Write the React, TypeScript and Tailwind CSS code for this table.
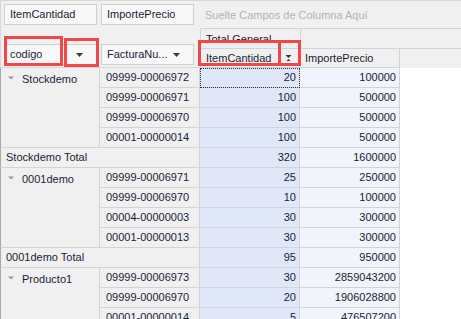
import React from "react";

type Item = [string, number, number];
interface Group {
  name: string;
  items: Item[];
  total?: [number, number];
}

const groups: Group[] = [
  {
    name: "Stockdemo",
    items: [
      ["09999-00006972", 20, 100000],
      ["09999-00006971", 100, 500000],
      ["09999-00006970", 100, 500000],
      ["00001-00000014", 100, 500000],
    ],
    total: [320, 1600000],
  },
  {
    name: "0001demo",
    items: [
      ["09999-00006971", 25, 250000],
      ["09999-00006970", 10, 100000],
      ["00004-00000003", 30, 300000],
      ["00001-00000013", 30, 300000],
    ],
    total: [95, 950000],
  },
  {
    name: "Producto1",
    items: [
      ["09999-00006973", 30, 2859043200],
      ["09999-00006970", 20, 1906028800],
      ["00001-00000014", 5, 476507200],
    ],
  },
];

function Caret() {
  return (
    <svg width="7" height="4" viewBox="0 0 7 4" className="shrink-0">
      <path d="M0 0 H7 L3.5 4 Z" fill="#3a3a3a" />
    </svg>
  );
}

function Expander() {
  return (
    <svg width="6" height="4" viewBox="0 0 6 4" className="shrink-0">
      <path d="M0 0.5 H6 L3 3.5 Z" fill="#9a9a9a" />
    </svg>
  );
}

function SortGlyph() {
  return (
    <svg width="7" height="8" viewBox="0 0 7 8" className="shrink-0">
      <path d="M0.5 1 H6.5 L3.5 4 Z" fill="#333" />
      <path d="M1.5 7 H5.5 L3.5 5 Z" fill="#333" />
    </svg>
  );
}

function FieldButton({ label, arrow }: { label: string; arrow?: boolean }) {
  return (
    <div className="w-[93px] h-[21px] shrink-0 bg-[#f8f8f8] border border-[#cfcfcf] flex items-center pl-[5px] pr-[13px] justify-between">
      <span className="truncate">{label}</span>
      {arrow && <Caret />}
    </div>
  );
}

const fmt = (n: number) => String(n);

export default function App() {
  return (
    <div
      className="w-[461px] h-[319px] overflow-hidden bg-white text-[11px] text-[#1c1c36] leading-none"
      style={{ fontFamily: '"Liberation Sans", Arial, sans-serif' }}
    >
      {/* column field area */}
      <div className="h-[28px] bg-[#f0f0f0] border-t border-l border-[#d8d8d8] flex items-start pt-[3px] pl-[3px] gap-[4px]">
        <FieldButton label="ItemCantidad" />
        <FieldButton label="ImportePrecio" />
        <span className="text-[#b2b2b2] ml-[7px] mt-[6px]">Suelte Campos de Columna Aquí</span>
      </div>

      {/* header area */}
      <div className="flex h-[40px] bg-[#f0f0f0]">
        <div className="w-[200px] shrink-0 border-l border-b border-[#d8d8d8] flex items-start pt-[16px] pl-[3px] gap-[4px]">
          <FieldButton label="codigo" arrow />
          <FieldButton label="FacturaNu..." arrow />
        </div>
        <div className="flex-1 flex flex-col border-t border-l border-[#d4d4d4]">
          <div className="flex h-[20px] border-b border-[#d4d4d4]">
            <div className="w-[100px] shrink-0 border-r border-[#d4d4d4] flex items-center pl-[5px] pt-[1px]">Total General</div>
            <div className="flex-1" />
          </div>
          <div className="flex h-[19px]">
            <div className="w-[99px] shrink-0 border-r border-b border-[#d4d4d4] flex items-center justify-between pl-[5px] pr-[7px]">
              <span>ItemCantidad</span>
              <SortGlyph />
            </div>
            <div className="w-[100px] shrink-0 border-r border-b border-[#d4d4d4] flex items-center pl-[5px]">ImportePrecio</div>
            <div className="flex-1" />
          </div>
        </div>
      </div>

      {/* data rows */}
      {groups.map((g, gi) => (
        <div key={g.name}>
          <div className="flex">
            <div className="w-[100px] shrink-0 bg-[#f0f0f0] border-l border-l-[#a8a8a8] border-r border-b border-[#d4d4d4] flex items-start pl-[7px] pt-[6px] gap-[8px]">
              <span className="mt-[2px]"><Expander /></span>
              <span>{g.name}</span>
            </div>
            <div className="flex flex-col">
              {g.items.map((it, i) => (
                <div key={i} className="flex h-[20px]">
                  <div className="w-[100px] shrink-0 bg-[#f0f0f0] border-r border-b border-[#d4d4d4] flex items-center pl-[6px]">{it[0]}</div>
                  <div
                    className={`w-[100px] shrink-0 bg-[#dfe7f8] border-r border-b border-[#d4d4d4] flex items-center justify-end pr-[3px] ${
                      gi === 0 && i === 0 ? "outline-1 outline-dotted outline-[#333] -outline-offset-1" : ""
                    }`}
                  >
                    {fmt(it[1])}
                  </div>
                  <div className="w-[100px] shrink-0 bg-[#f1f4fa] border-r border-b border-[#d4d4d4] flex items-center justify-end pr-[3px]">{fmt(it[2])}</div>
                </div>
              ))}
            </div>
          </div>
          {g.total && (
            <div className="flex h-[20px]">
              <div className="w-[200px] shrink-0 bg-[#f0f0f0] border-l border-l-[#a8a8a8] border-r border-b border-[#d4d4d4] flex items-center pl-[5px]">
                {g.name} Total
              </div>
              <div className="w-[100px] shrink-0 bg-[#dfe7f8] border-r border-b border-[#d4d4d4] flex items-center justify-end pr-[3px]">{fmt(g.total[0])}</div>
              <div className="w-[100px] shrink-0 bg-[#f1f4fa] border-r border-b border-[#d4d4d4] flex items-center justify-end pr-[3px]">{fmt(g.total[1])}</div>
            </div>
          )}
        </div>
      ))}

      {/* annotation boxes */}
      <div className="pointer-events-none">
        <div className="absolute left-[4px] top-[36px] w-[59px] h-[30px] border-[3px] border-[#f04848]" />
        <div className="absolute left-[64px] top-[38px] w-[35px] h-[29px] border-[3px] border-[#f04848]" />
        <div className="absolute left-[198px] top-[40px] w-[103px] h-[26px] border-[3px] border-[#f04848]" />
        <div className="absolute left-[278px] top-[40px] w-[23px] h-[26px] border-[3px] border-[#f04848]" />
      </div>
    </div>
  );
}
